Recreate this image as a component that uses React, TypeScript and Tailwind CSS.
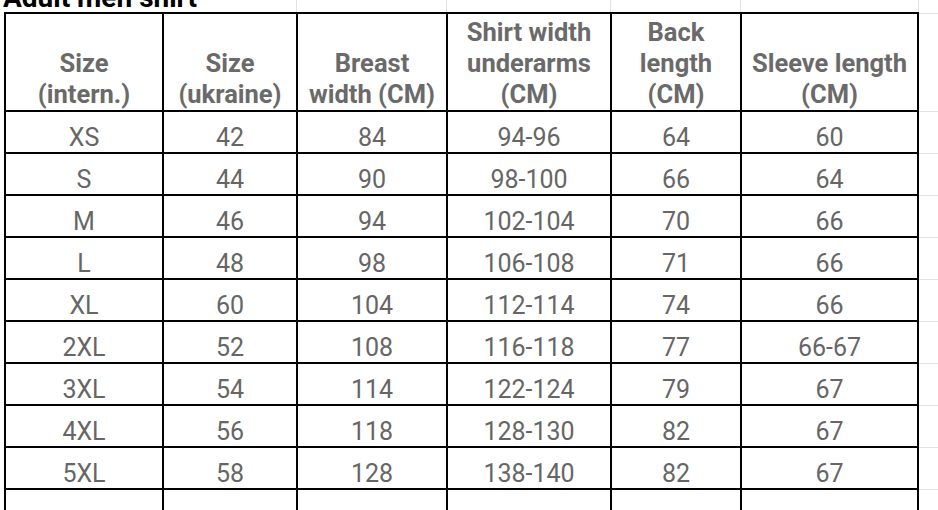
import React from "react";

const header = [
  ["Size", "(intern.)"],
  ["Size", "(ukraine)"],
  ["Breast", "width (CM)"],
  ["Shirt width", "underarms", "(CM)"],
  ["Back", "length", "(CM)"],
  ["Sleeve length", "(CM)"],
];

const rows = [
  ["XS", "42", "84", "94-96", "64", "60"],
  ["S", "44", "90", "98-100", "66", "64"],
  ["M", "46", "94", "102-104", "70", "66"],
  ["L", "48", "98", "106-108", "71", "66"],
  ["XL", "60", "104", "112-114", "74", "66"],
  ["2XL", "52", "108", "116-118", "77", "66-67"],
  ["3XL", "54", "114", "122-124", "79", "67"],
  ["4XL", "56", "118", "128-130", "82", "67"],
  ["5XL", "58", "128", "138-140", "82", "67"],
  ["", "", "", "", "", ""],
];

export default function App() {
  return (
    <div
      className="w-[938px] h-[510px] overflow-hidden bg-white flex flex-col"
      style={{ fontFamily: "Roboto, 'Liberation Sans', Arial, sans-serif" }}
    >
      {/* title row */}
      <div className="h-[12px] flex shrink-0">
        <div className="w-[297px] h-full border-r border-[#e2e2e2] flex items-end pl-[3px]">
          <div className="text-[28px] leading-[28px] font-bold text-black whitespace-nowrap">
            Adult men shirt
          </div>
        </div>
        <div className="w-[150px] h-full border-r border-[#e2e2e2]" />
        <div className="w-[164px] h-full border-r border-[#e2e2e2]" />
        <div className="w-[130px] h-full border-r border-[#e2e2e2]" />
        <div className="w-[178px] h-full border-r border-[#e2e2e2]" />
      </div>

      <div className="flex">
        <div className="w-[4px] shrink-0" />
        <div className="shrink-0 bg-black p-[2px] grid gap-[2px] grid-cols-[156px_132px_148px_162px_128px_175px]">
          {header.map((lines, i) => (
            <div
              key={"h" + i}
              className="h-[96px] bg-white flex flex-col items-center justify-end text-[25.5px] leading-[31px] font-bold text-[#6a6a6a] text-center"
            >
              {lines.map((l, j) => (
                <div key={j} className="whitespace-nowrap">
                  {l}
                </div>
              ))}
            </div>
          ))}
          {rows.map((r, ri) =>
            r.map((c, ci) => (
              <div
                key={ri + "-" + ci}
                className="h-[40px] bg-white flex items-end justify-center text-[25px] leading-[28px] text-[#666666]"
              >
                {c}
              </div>
            ))
          )}
        </div>
        <div className="w-[19px] shrink-0 flex flex-col">
          <div className="h-[1px]" />
          <div className="h-[98px] border-t border-[#e2e2e2]" />
          {rows.map((_, i) => (
            <div key={i} className="h-[42px] shrink-0 border-t border-[#e2e2e2]" />
          ))}
        </div>
      </div>
    </div>
  );
}
